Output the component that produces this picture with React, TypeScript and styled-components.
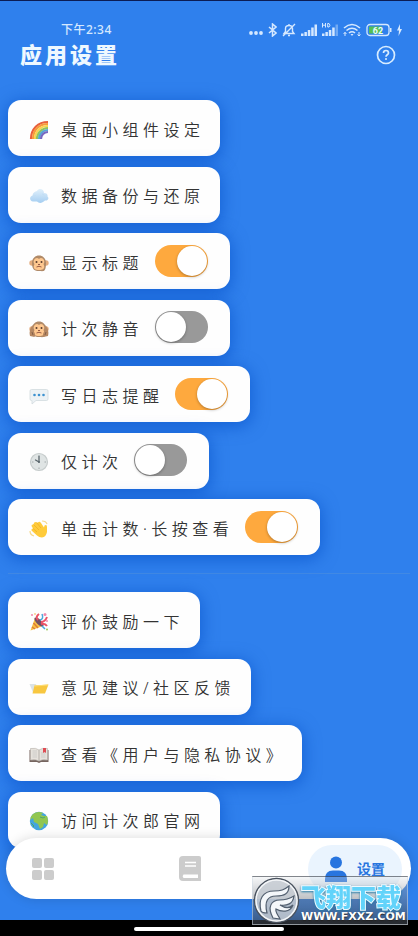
import React from "react";
import styled, { createGlobalStyle, css } from "styled-components";

const GlobalStyle = createGlobalStyle`
  *, *::before, *::after { box-sizing: border-box; }
  body {
    margin: 0;
    background: #2f80ed;
    font-family: "Noto Sans", "Noto Sans CJK SC", sans-serif;
  }
  button, input { font: inherit; margin: 0; }
`;

const Screen = styled.div`
  position: relative;
  display: flex;
  flex-direction: column;
  height: 100vh;
  overflow: hidden;
  background: #2f80ed;
  border-top: 1px solid #0b1c55;
`;

const StatusBar = styled.div`
  display: flex;
  align-items: center;
  justify-content: space-between;
  height: 16px;
  margin-top: 21px;
  padding: 0 16px 0 61px;
  color: #d5e8ff;
`;

const Clock = styled.time`
  font-size: 12px;
  line-height: 16px;
  font-weight: 500;
  letter-spacing: 0.04em;
`;

const StatusIcons = styled.div`
  display: flex;
  align-items: center;
  gap: 5px;
  svg { display: block; }
`;

const Header = styled.header`
  display: flex;
  align-items: center;
  justify-content: space-between;
  height: 34px;
  padding: 0 22px 0 20px;
`;

const Title = styled.h1`
  margin: 0 0 2px;
  color: #eef8ff;
  font-size: 22px;
  line-height: 32px;
  font-weight: 900;
  letter-spacing: 3px;
`;

const HelpButton = styled.button`
  display: flex;
  padding: 0;
  border: 0;
  background: none;
  color: #d8ecff;
`;

const Content = styled.main`
  flex: 1;
  min-height: 0;
  overflow: hidden;
  padding: 28px 8px 0;
`;

const Group = styled.section<{ $rows: "long" | "short" }>`
  display: flex;
  flex-direction: column;
  align-items: flex-start;
  justify-content: space-between;
  gap: 10px;
  min-height: ${(p) => (p.$rows === "long" ? 455 : 256)}px;
`;

const Divider = styled.hr`
  height: 1px;
  margin: 18px 0;
  border: 0;
  background: #4189e4;
`;

const cardStyle = css`
  display: flex;
  align-items: center;
  height: 56px;
  padding: 3px 16px 0 21px;
  border: 0;
  border-radius: 13px;
  background: #fefefe;
  box-shadow: 0 3px 16px 2px rgba(0, 75, 195, 0.55);
  color: #333;
  font-size: 16px;
  line-height: 24px;
  white-space: nowrap;
`;

const ActionCard = styled.button`
  ${cardStyle}
`;

const SwitchCard = styled.label`
  ${cardStyle}
  padding-right: 22px;
`;

const CardIcon = styled.span`
  display: flex;
  width: 20px;
  margin-right: 12px;
`;

const CardText = styled.span`
  letter-spacing: 0.28em;
  font-weight: 350;
`;

const Toggle = styled.input`
  appearance: none;
  display: flex;
  justify-content: flex-start;
  width: 53px;
  height: 32px;
  margin: 0 0 4px 12px;
  padding: 1px;
  border-radius: 16px;
  background: #999;
  &::before {
    content: "";
    width: 30px;
    height: 30px;
    border-radius: 50%;
    background: #fff;
    box-shadow: 0 1px 3px rgba(0, 0, 0, 0.3);
  }
  &:checked {
    justify-content: flex-end;
    background: #fea93e;
  }
`;

const BottomNav = styled.nav`
  position: absolute;
  right: 7px;
  bottom: 37px;
  left: 6px;
  display: flex;
  align-items: center;
  justify-content: space-between;
  height: 61px;
  padding: 0 9px 0 8px;
  border-radius: 31px;
  background: #fff;
  box-shadow: 0 0 12px rgba(0, 0, 0, 0.14);
`;

const NavButton = styled.button<{ $active?: boolean }>`
  display: flex;
  align-items: center;
  justify-content: center;
  gap: 10px;
  width: ${(p) => (p.$active ? 94 : 58)}px;
  height: 48px;
  padding: 0;
  border: 0;
  border-radius: 24px;
  background: ${(p) => (p.$active ? "#eaf4fe" : "transparent")};
  color: ${(p) => (p.$active ? "#2875df" : "#ccc")};
  font-size: 14px;
  line-height: 20px;
  font-weight: 700;
`;

const SystemBar = styled.footer`
  display: flex;
  align-items: center;
  justify-content: center;
  flex: none;
  height: 16px;
  padding-top: 2px;
  background: #000;
`;

const HomeIndicator = styled.div`
  width: 36%;
  height: 4px;
  border-radius: 2px;
  background: #fff;
`;

const Watermark = styled.aside`
  position: absolute;
  right: 10px;
  bottom: 11px;
  display: flex;
  align-items: center;
  gap: 1px;
  width: 156px;
  height: 49px;
  border: 1px solid rgba(210, 220, 230, 0.55);
  border-top-color: transparent;
  background: linear-gradient(rgba(225, 230, 235, 0.3), rgba(60, 66, 76, 0.65));
  > svg { flex: none; }
`;

const WatermarkText = styled.div`
  display: flex;
  flex-direction: column;
  padding-top: 6px;
`;

const WatermarkName = styled.span`
  color: #62d3fa;
  font-size: 25px;
  line-height: 26px;
  font-weight: 900;
  white-space: nowrap;
  paint-order: stroke;
  -webkit-text-stroke: 2px #effaff;
  filter: drop-shadow(0 1px 1px #247aa5);
`;

const WatermarkSite = styled.span`
  color: #fff;
  font-family: "DejaVu Sans", sans-serif;
  font-size: 11px;
  line-height: 14px;
  font-weight: 700;
  text-shadow: 0 1px 1px #222;
`;

const Rainbow = () => (
  <svg width="20" height="20" viewBox="0 0 20 20" fill="none" strokeWidth="2.2">
    <path d="M2 19C2 9 9 2 19 2" stroke="#e8603c" />
    <path d="M4 19C4 10 10 4 19 4" stroke="#f69a3c" />
    <path d="M6 19C6 11.5 11.5 6 19 6" stroke="#f9d34e" />
    <path d="M8 19C8 13 13 8 19 8" stroke="#90c45b" />
    <path d="M10 19C10 14 14 10 19 10" stroke="#55a5d6" />
    <path d="M12 19C12 15 15 12 19 12" stroke="#7667c0" />
  </svg>
);

const Cloud = () => (
  <svg width="20" height="20" viewBox="0 0 20 20">
    <defs>
      <linearGradient id="cloud" x1="0" y1="0" x2="0" y2="1">
        <stop stopColor="#e1f0fb" />
        <stop offset="1" stopColor="#a5cef1" />
      </linearGradient>
    </defs>
    <path d="M4 15.5C.5 15.5 0 10.500 3.500 9.500 3.500 7 6 5.500 8 5 10 1.500 15 3 15 7 18 7 19 9 18.500 10.500 20.500 12 19 15 16 14.500 13 17.500 10 17.500 8 15.500Z" fill="url(#cloud)" />
    <path d="M4 10q3-1 4 1m5-3q3 0 2 3" stroke="#c2def5" fill="none" />
  </svg>
);

const Monkey = ({ covered }: { covered?: boolean }) => (
  <svg width="20" height="20" viewBox="0 0 20 20">
    <circle cx="3" cy="10" r="2.700" fill="#e4ac7e" />
    <circle cx="17" cy="10" r="2.700" fill="#e4ac7e" />
    <path d="M3 10C3 0 17 0 17 10S14 18 10 18 3 17 3 10Z" fill="#b08a68" />
    <path d="M10 6C7 3 3 8 5.500 11 3 16 7 17 10 17S17 16 14.500 11C17 8 13 3 10 6Z" fill="#ffc88f" />
    <circle cx="7.500" cy="9" r="1" fill="#593c2d" />
    <circle cx="12.500" cy="9" r="1" fill="#593c2d" />
    <path d="M9 11.500h2M7.500 14q2.500-1.500 5 0" stroke="#985b46" fill="none" />
    {covered && (
      <>
        <path d="M3.500 6Q-.500 11 1 17L5.500 18Q7 15 4.500 12Z" fill="#b58762" />
        <path d="M16.500 6Q20.500 11 19 17L14.500 18Q13 15 15.500 12Z" fill="#b58762" />
        <path d="M3 13l1 3M17 13l-1 3" stroke="#84604a" />
      </>
    )}
  </svg>
);

const Speech = () => (
  <svg width="20" height="20" viewBox="0 0 20 20">
    <path d="M2.500 3.500h15q1.500 0 1.500 1.500v8q0 1.500-1.500 1.500H7L3 18v-3.500H2.500Q1 14.500 1 13V5Q1 3.500 2.500 3.500Z" fill="#edf2f5" stroke="#d2dade" strokeWidth=".8" />
    <circle cx="5.500" cy="9" r="1.300" fill="#3c91d0" />
    <circle cx="10" cy="9" r="1.300" fill="#3c91d0" />
    <circle cx="14.500" cy="9" r="1.300" fill="#3c91d0" />
  </svg>
);

const ClockFace = () => (
  <svg width="20" height="20" viewBox="0 0 20 20">
    <circle cx="10" cy="10" r="8.500" fill="#dfe4e4" stroke="#c6cccc" strokeWidth="1.200" />
    <path d="M10 3v1.500M10 15.500V17M3 10h1.500M15.500 10H17" stroke="#929b9d" strokeWidth=".8" />
    <path d="M10 10V4.500M10 10L6.500 8" stroke="#5a666c" strokeWidth="1.300" strokeLinecap="round" />
    <circle cx="10" cy="10" r="1" fill="#5a666c" />
  </svg>
);

const Wave = () => (
  <svg width="20" height="20" viewBox="0 0 20 20">
    <path d="M8 16.500L2.500 11.500Q2 9.500 4 9.500L2.500 7Q2.500 5 4.500 5.500L5 4Q6 2.500 7.500 3.500L9 3.500Q10.500 2 12 4L15 8.500 15.500 6.500Q18 5 18 8V13Q17 18 13 18.500 10 18.500 8 16.500Z" fill="#ffcb3a" />
    <path d="M4 9.500L8 13M4.500 5.500L10 11M7.500 3.500L12 9" stroke="#efb023" strokeWidth=".8" />
    <path d="M13 2q4 0 5 3M1 12q0 4 4 5" stroke="#f6d98c" fill="none" strokeWidth="1.200" />
  </svg>
);

const Party = () => (
  <svg width="20" height="20" viewBox="0 0 20 20">
    <path d="M1.500 18.500L6 6 14 14Z" fill="#f7c044" />
    <path d="M4.500 11L9 16M3 15l3 2" stroke="#df7e35" strokeWidth="1.500" />
    <ellipse cx="10" cy="10" rx="2.500" ry="6" transform="rotate(-45 10 10)" fill="#735065" />
    <path d="M9 8Q6 5 10 2M12 10Q16 10 18 5M12 12Q16 11 18 14" stroke="#ec5264" fill="none" strokeWidth="2" />
    <path d="M11 8Q15 7 13 2M13 14L16 17" stroke="#49a8db" fill="none" strokeWidth="1.500" />
    <g fill="#f28aae">
      <circle cx="3" cy="3" r="1" /><circle cx="16" cy="2.500" r="1.500" /><circle cx="18" cy="9" r="1" />
    </g>
    <circle cx="18" cy="17.500" r="1" fill="#9dca57" />
    <circle cx="6" cy="2" r=".8" fill="#f2b645" />
  </svg>
);

const Folder = () => (
  <svg width="20" height="20" viewBox="0 0 20 20">
    <path d="M.500 6h6l1.500 1.500h9L6 14.500H4Z" fill="#dbe3e5" />
    <path d="M5.500 7.500L19.500 6.500 16 15.500H3.500Z" fill="#f8c740" />
    <path d="M5.500 8L19 7" stroke="#ffdf76" />
  </svg>
);

const OpenBook = () => (
  <svg width="20" height="20" viewBox="0 0 20 20">
    <path d="M.500 5h19v12h-7.500l-2 1-2-1H.500Z" fill="#76655f" />
    <path d="M1.500 3.500Q7 2.500 10 5V16Q7 14 1.500 15ZM18.500 3.500Q13 2.500 10 5V16Q13 14 18.500 15Z" fill="#e6e2dc" stroke="#bcb7b1" strokeWidth=".7" />
    <path d="M3.500 6h4.500M3.500 8h4.500M3.500 10h4.500M3.500 12h4.500M12 8h4.500M12 10h4.500M12 12h4.500" stroke="#c2c3c2" strokeWidth=".7" />
    <path d="M14 3h3v5l-1.500-1L14 8Z" fill="#df4c54" />
  </svg>
);

const Globe = () => (
  <svg width="20" height="20" viewBox="0 0 20 20">
    <circle cx="10" cy="10" r="9.200" fill="#43a5df" />
    <path d="M4 3Q9-.500 14 2L12 4 15 5 18 5Q20 10 18 14L15 12 14 16 11 18 9 13 5 11 4 7 1.500 9Q1.500 5 4 3Z" fill="#91c650" />
    <path d="M11 6l3 1 2-1M2 12l3 3-1 1" stroke="#4da769" fill="none" />
  </svg>
);

const SignalBars = ({ hd }: { hd?: boolean }) => (
  <svg width="16" height="14" viewBox="0 0 16 14">
    <g fill="currentColor">
      <path d="M0 10.500h2.500V13H0ZM3.400 9h2.500v4H3.400ZM6.800 7h2.500v6H6.800ZM10.200 4.500h2.500V13h-2.500Z" />
      <path d="M13.500 1.500H16V13h-2.500Z" opacity={hd ? 0.4 : 1} />
    </g>
    {hd && <path d="M.500 0v4.500M3.500 0v4.500M.500 2.200h3M5.700.500h1.300q2 1.700 0 3.500H5.700Z" stroke="currentColor" fill="none" />}
  </svg>
);

const StatusGlyphs = () => (
  <StatusIcons>
    <svg width="14" height="14" viewBox="0 0 14 14" fill="currentColor">
      <circle cx="2" cy="10" r="1.900" /><circle cx="7" cy="10" r="1.900" /><circle cx="12" cy="10" r="1.900" />
    </svg>
    <svg width="9" height="14" viewBox="0 0 9 14" fill="none" stroke="currentColor" strokeWidth="1.500">
      <path d="M1 4l7 6-3.500 3V1L8 4 1 10" />
    </svg>
    <svg width="14" height="14" viewBox="0 0 14 14" fill="none" stroke="currentColor" strokeWidth="1.400">
      <path d="M2 10.500h10L10.500 8.500V5.500Q10.500 2.500 7 2.500T3.500 5.500V8.500ZM6 12.500h2M7 1v1.500M1 13L13 1" />
    </svg>
    <SignalBars />
    <SignalBars hd />
    <svg width="18" height="14" viewBox="0 0 18 14" fill="none" stroke="currentColor" strokeWidth="1.600">
      <path d="M1 5Q9-2 17 5M3.500 7.500Q9 3 14.500 7.500M6 10Q9 7.500 12 10" />
      <path d="M7.500 11h3L9 13Z" fill="currentColor" stroke="none" />
      <path d="M2 9v4M.500 11L2 9.500 3.500 11M16 9v4M14.500 11.500L16 13 17.500 11.500" strokeWidth="1" />
    </svg>
    <svg width="26" height="14" viewBox="0 0 26 14">
      <rect x="1" y="1.500" width="22" height="11" rx="3" fill="none" stroke="currentColor" strokeWidth="1.300" />
      <path d="M3 3.500h13v7H3Z" fill="#54bf55" />
      <path d="M24 5h1.500v4H24Z" fill="currentColor" />
      <text x="12" y="10.500" textAnchor="middle" fontSize="9" fontFamily="Roboto, sans-serif" fontWeight="700" fill="#e8fbff">62</text>
    </svg>
    <svg width="5" height="12" viewBox="0 0 5 12" fill="currentColor">
      <path d="M3 0L0 6.500H2L1.500 12 5 5H3Z" />
    </svg>
  </StatusIcons>
);

const HelpIcon = () => (
  <svg width="20" height="20" viewBox="0 0 20 20" fill="none" stroke="currentColor">
    <circle cx="10" cy="10" r="8.500" strokeWidth="1.700" />
    <path d="M7.500 8Q7.500 5.500 10 5.500T12.500 8C12.500 9.800 10 9.800 10 11.700" strokeWidth="1.700" />
    <circle cx="10" cy="14" r="1" fill="currentColor" stroke="none" />
  </svg>
);

const TilesIcon = () => (
  <svg width="22" height="22" viewBox="0 0 22 22" fill="currentColor">
    <rect width="10" height="10" rx="2" /><rect x="12" width="10" height="10" rx="2" />
    <rect y="12" width="10" height="10" rx="2" /><rect x="12" y="12" width="10" height="10" rx="2" />
  </svg>
);

const JournalIcon = () => (
  <svg width="22" height="25" viewBox="0 0 22 25">
    <path d="M4 0H20Q22 0 22 2V25H4Q0 25 0 21V4Q0 0 4 0Z" fill="currentColor" />
    <path d="M6 6.500H17M6 10H17" stroke="#fff" strokeWidth="1.500" />
    <path d="M4.500 18.500H19V22H4.500Q2.800 20.300 4.500 18.500Z" fill="#fff" />
  </svg>
);

const PersonIcon = () => (
  <svg width="22" height="26" viewBox="0 0 22 26" fill="currentColor">
    <circle cx="11" cy="6.500" r="6" />
    <path d="M0 26V23Q0 14.500 8 14.500H14Q22 14.500 22 23V26Z" />
  </svg>
);

const WatermarkLogo = () => (
  <svg width="47" height="47" viewBox="0 0 47 47">
    <circle cx="23.500" cy="23.500" r="22" fill="#c5cbd2" fillOpacity=".85" stroke="#49525e" strokeWidth="1.500" />
    <circle cx="23.500" cy="23.500" r="20.500" fill="none" stroke="#f4f6f8" strokeWidth="1.500" />
    <path d="M8 34C5 22 10 14 21 14C28 14 31 13 36 9C36 17 31 19 23 19C15 19 11 24 14 36C11 36 9 36 8 34Z" fill="#f4f7fa" stroke="#515e6e" strokeWidth="1.200" />
    <path d="M20 41C14 30 18 23 27 23C33 23 36 22 41 19C40 27 34 29 27 28C33 32 37 31 40 28C37 36 28 35 23 32C22 35 25 38 27 42Z" fill="#f4f7fa" stroke="#515e6e" strokeWidth="1.200" />
  </svg>
);

type Setting = { label: string; icon: React.ReactNode; on?: boolean };

const preferences: Setting[] = [
  { label: "桌面小组件设定", icon: <Rainbow /> },
  { label: "数据备份与还原", icon: <Cloud /> },
  { label: "显示标题", icon: <Monkey />, on: true },
  { label: "计次静音", icon: <Monkey covered />, on: false },
  { label: "写日志提醒", icon: <Speech />, on: true },
  { label: "仅计次", icon: <ClockFace />, on: false },
  { label: "单击计数·长按查看", icon: <Wave />, on: true },
];

const about: Setting[] = [
  { label: "评价鼓励一下", icon: <Party /> },
  { label: "意见建议/社区反馈", icon: <Folder /> },
  { label: "查看《用户与隐私协议》", icon: <OpenBook /> },
  { label: "访问计次郎官网", icon: <Globe /> },
];

const SettingCard = ({ label, icon, on }: Setting) => {
  const body = (
    <>
      <CardIcon aria-hidden="true">{icon}</CardIcon>
      <CardText>{label}</CardText>
    </>
  );
  if (on === undefined) return <ActionCard type="button">{body}</ActionCard>;
  return (
    <SwitchCard>
      {body}
      <Toggle type="checkbox" role="switch" defaultChecked={on} />
    </SwitchCard>
  );
};

export default function App() {
  return (
    <>
      <GlobalStyle />
      <Screen>
        <StatusBar>
          <Clock>下午2:34</Clock>
          <StatusGlyphs />
        </StatusBar>
        <Header>
          <Title>应用设置</Title>
          <HelpButton type="button" aria-label="帮助"><HelpIcon /></HelpButton>
        </Header>
        <Content>
          <Group $rows="long">
            {preferences.map((item) => <SettingCard key={item.label} {...item} />)}
          </Group>
          <Divider />
          <Group $rows="short">
            {about.map((item) => <SettingCard key={item.label} {...item} />)}
          </Group>
        </Content>
        <SystemBar><HomeIndicator /></SystemBar>
        <BottomNav>
          <NavButton type="button" aria-label="计数"><TilesIcon /></NavButton>
          <NavButton type="button" aria-label="日志"><JournalIcon /></NavButton>
          <NavButton type="button" $active><PersonIcon />设置</NavButton>
        </BottomNav>
        <Watermark>
          <WatermarkLogo />
          <WatermarkText>
            <WatermarkName>飞翔下载</WatermarkName>
            <WatermarkSite>WWW.FXXZ.COM</WatermarkSite>
          </WatermarkText>
        </Watermark>
      </Screen>
    </>
  );
}
